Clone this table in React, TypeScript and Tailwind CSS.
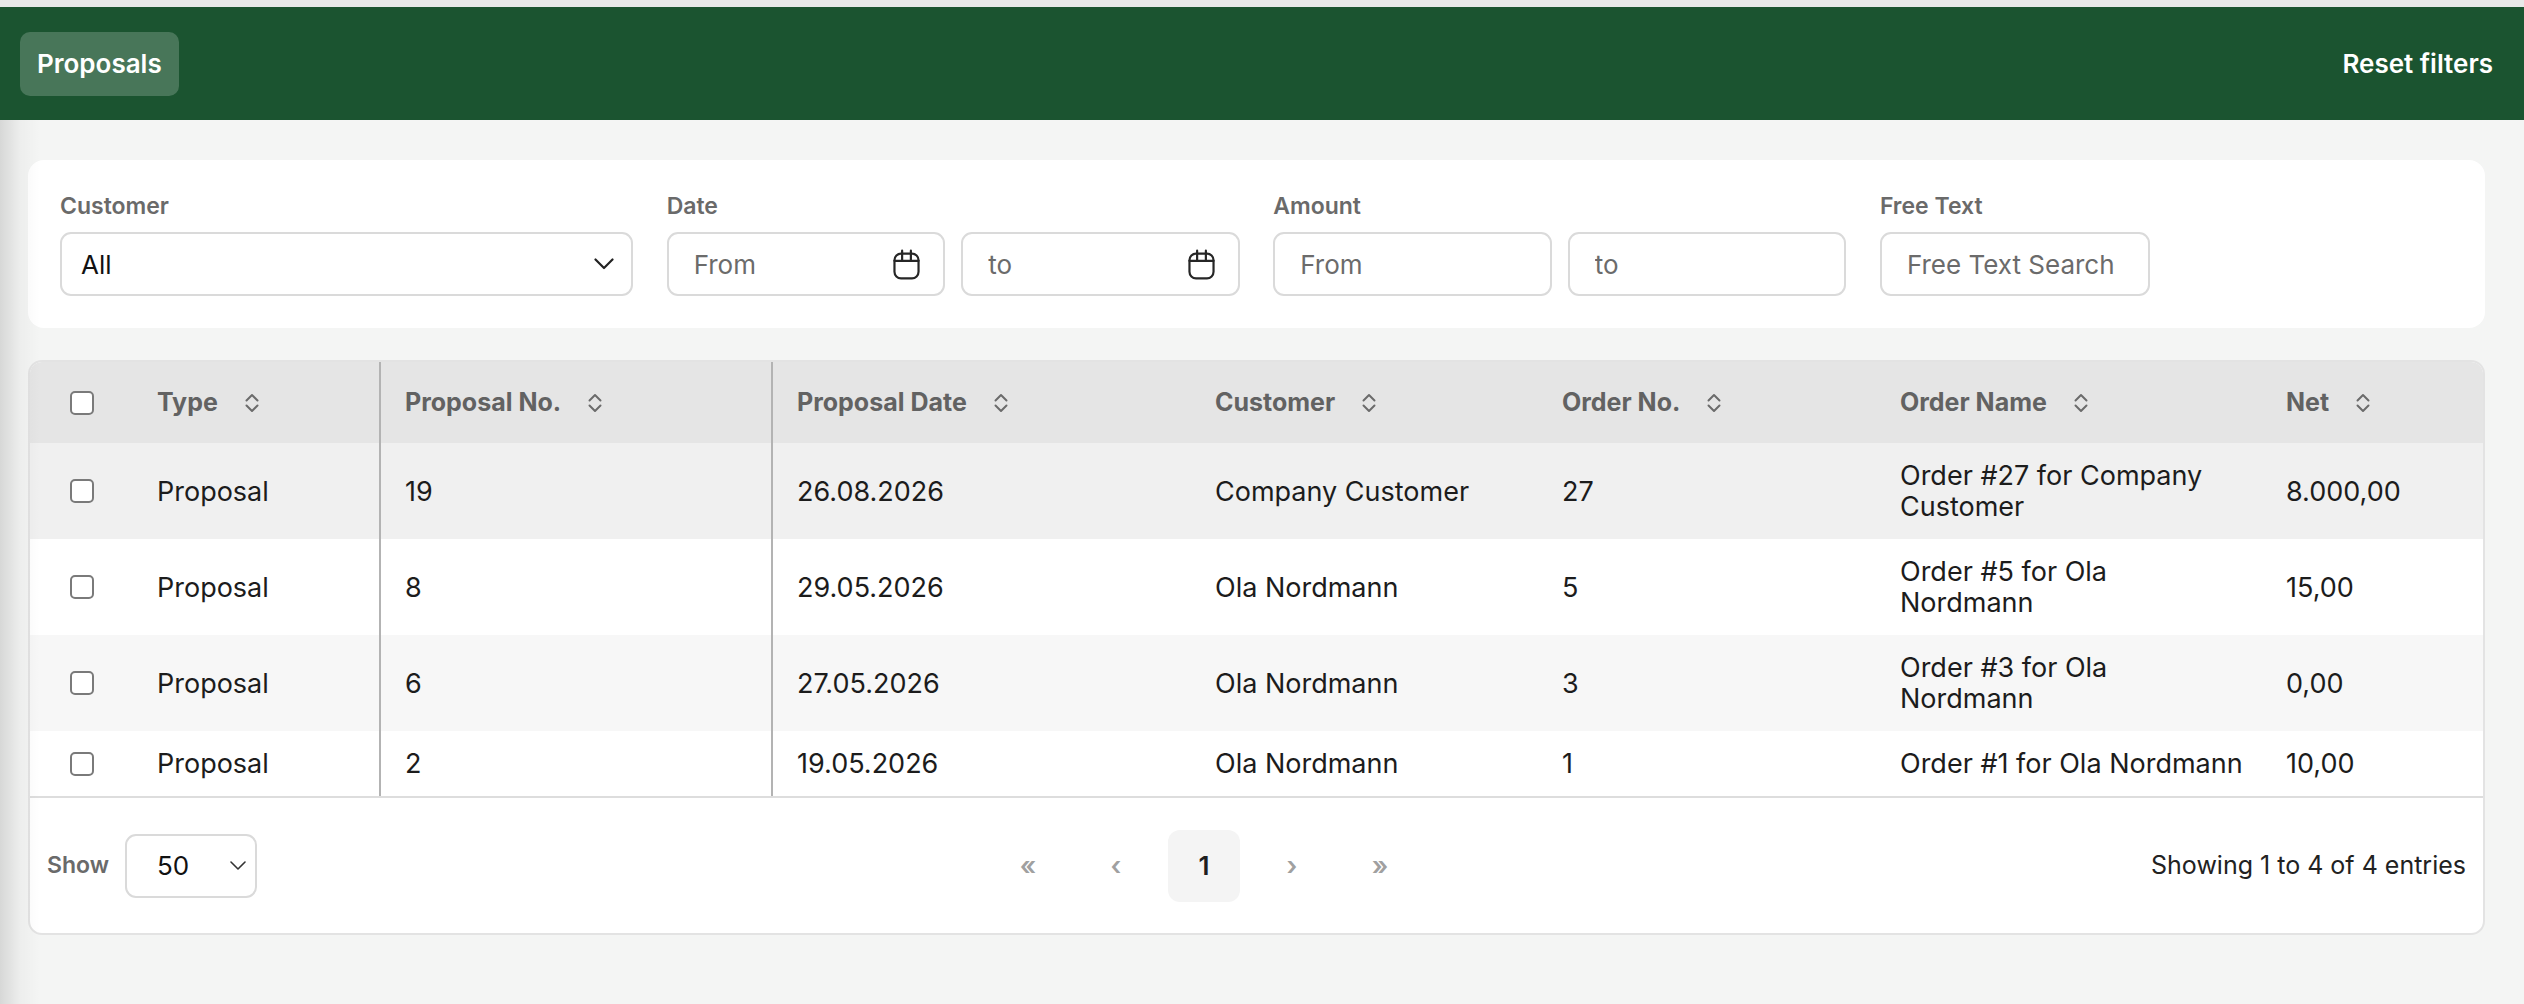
import type { ReactNode } from 'react';

const ROWS = [
  { no: '19', date: '26.08.2026', customer: 'Company Customer', order: '27', name: 'Order #27 for Company Customer', net: '8.000,00', bg: 'bg-[#f0f0f0]' },
  { no: '8', date: '29.05.2026', customer: 'Ola Nordmann', order: '5', name: 'Order #5 for Ola Nordmann', net: '15,00', bg: 'bg-white' },
  { no: '6', date: '27.05.2026', customer: 'Ola Nordmann', order: '3', name: 'Order #3 for Ola Nordmann', net: '0,00', bg: 'bg-[#f7f7f7]' },
  { no: '2', date: '19.05.2026', customer: 'Ola Nordmann', order: '1', name: 'Order #1 for Ola Nordmann', net: '10,00', bg: 'bg-white' },
];

const inputBox = 'h-16 rounded-[11px] border-2 border-[#dadada] bg-white text-[26px] text-[#111]';

function SortIcon() {
  return (
    <svg viewBox="0 0 16 22" className="h-[22px] w-4 shrink-0" fill="none" stroke="#6b6b6b" strokeWidth="2" strokeLinecap="round" strokeLinejoin="round">
      <path d="M2.5 8.5 8 3l5.5 5.5" />
      <path d="M2.5 13.5 8 19l5.5-5.5" />
    </svg>
  );
}

function CalendarIcon() {
  return (
    <svg viewBox="0 0 24 24" className="h-[35px] w-[35px] shrink-0" fill="none" stroke="#262626" strokeWidth="1.5" strokeLinecap="round">
      <rect x="3.75" y="4.5" width="16.5" height="17" rx="4.5" />
      <path d="M3.75 9.5h16.5" />
      <path d="M9 2.5v7M15 2.5v7" />
    </svg>
  );
}

function Chevron({ small = false }: { small?: boolean }) {
  return small ? (
    <svg viewBox="0 0 16 9" className="h-[9px] w-4" fill="none" stroke="#333" strokeWidth="1.6" strokeLinecap="round" strokeLinejoin="round">
      <path d="M1 1l7 7 7-7" />
    </svg>
  ) : (
    <svg viewBox="0 0 20 12" className="h-3 w-5" fill="none" stroke="#222" strokeWidth="2.2" strokeLinecap="round" strokeLinejoin="round">
      <path d="M1.5 1.5 10 10l8.5-8.5" />
    </svg>
  );
}

function Field({ label, children }: { label: string; children: ReactNode }) {
  return (
    <div className="min-w-0">
      <label className="mb-3 block text-[23px] leading-[28px] font-semibold text-[#6a6a6a]">{label}</label>
      {children}
    </div>
  );
}

function Checkbox() {
  return <input type="checkbox" className="mx-auto block h-6 w-6 appearance-none rounded-[5px] border-2 border-[#7a7a7a] bg-white" />;
}

function Th({ children, divider = false }: { children: ReactNode; divider?: boolean }) {
  return (
    <th className={`h-[81px] px-6 text-left align-middle text-[25px] font-bold text-[#626262] ${divider ? 'border-r-2 border-r-[#b3b3b3]' : ''}`}>
      <div className="flex items-center gap-[26px]">
        <span>{children}</span>
        <SortIcon />
      </div>
    </th>
  );
}

export default function App() {
  const td = 'px-6 py-[17px] align-middle text-[27px] leading-[31px] text-[#1c1c1c]';
  const divider = 'border-r-2 border-r-[#b3b3b3]';

  return (
    <div className="flex min-h-screen flex-col bg-[#f4f5f4] font-[Inter,sans-serif]">
      <div className="h-[7px] bg-[#e8e9e8]" />
      <header className="flex h-[113px] items-center justify-between bg-[#1b5430] px-5">
        <button className="h-16 rounded-[10px] bg-white/20 px-[17px] text-[26px] font-semibold text-white">Proposals</button>
        <button className="h-16 px-[11px] text-[26px] font-semibold text-white">Reset filters</button>
      </header>

      <main className="relative flex flex-1 flex-col gap-8 pt-10 pr-[39px] pb-[71px] pl-[28px]">
        <div className="pointer-events-none absolute inset-y-0 left-0 w-[40px] bg-linear-to-r from-black/[0.12] via-black/[0.03] to-transparent" />

        <section className="grid grid-cols-4 gap-x-[33.5px] rounded-2xl bg-white p-8">
          <Field label="Customer">
            <div className={`${inputBox} flex w-full items-center justify-between pr-[17px] pl-[19px]`}>
              <span>All</span>
              <Chevron />
            </div>
          </Field>
          <Field label="Date">
            <div className="flex gap-4">
              {['From', 'to'].map((p) => (
                <div key={p} className={`${inputBox} flex min-w-0 flex-1 items-center pr-[19px] pl-[25px]`}>
                  <input placeholder={p} className="w-0 min-w-0 flex-1 bg-transparent outline-none placeholder:text-[#6b6b6b]" />
                  <CalendarIcon />
                </div>
              ))}
            </div>
          </Field>
          <Field label="Amount">
            <div className="flex gap-4">
              {['From', 'to'].map((p) => (
                <input key={p} placeholder={p} className={`${inputBox} w-0 min-w-0 flex-1 px-[25px] outline-none placeholder:text-[#6b6b6b]`} />
              ))}
            </div>
          </Field>
          <Field label="Free Text">
            <input placeholder="Free Text Search" className={`${inputBox} w-[270px] px-[25px] outline-none placeholder:text-[#6b6b6b]`} />
          </Field>
        </section>

        <section className="overflow-hidden rounded-[14px] border-2 border-[#e3e3e3] bg-white">
          <table className="w-full table-fixed border-collapse">
            <colgroup>
              <col className="w-[103px]" />
              <col className="w-[247px]" />
              <col className="w-[392px]" />
              <col className="w-[419px]" />
              <col className="w-[347px]" />
              <col className="w-[338px]" />
              <col className="w-[386px]" />
              <col />
            </colgroup>
            <thead className="bg-[#e5e5e5]">
              <tr>
                <th className="h-[81px] align-middle">
                  <Checkbox />
                </th>
                <Th divider>Type</Th>
                <Th divider>Proposal No.</Th>
                <Th>Proposal Date</Th>
                <Th>Customer</Th>
                <Th>Order No.</Th>
                <Th>Order Name</Th>
                <Th>Net</Th>
              </tr>
            </thead>
            <tbody>
              {ROWS.map((r) => (
                <tr key={r.no} className={r.bg}>
                  <td className="align-middle">
                    <Checkbox />
                  </td>
                  <td className={`${td} ${divider}`}>Proposal</td>
                  <td className={`${td} ${divider}`}>{r.no}</td>
                  <td className={td}>{r.date}</td>
                  <td className={td}>{r.customer}</td>
                  <td className={td}>{r.order}</td>
                  <td className={`${td} !pr-2`}>
                    <span className="block max-w-[344px]">{r.name}</span>
                  </td>
                  <td className={td}>{r.net}</td>
                </tr>
              ))}
            </tbody>
          </table>

          <div className="flex h-[137px] items-center justify-between border-t-2 border-[#dddddd] px-[17px]">
            <div className="flex items-center gap-4">
              <span className="text-[23px] font-semibold text-[#6a6a6a]">Show</span>
              <div className="flex h-16 w-[132px] items-center justify-between rounded-[11px] border-2 border-[#dadada] pr-[9px] pl-[30px] text-[26px] text-[#111]">
                <span>50</span>
                <Chevron small />
              </div>
            </div>

            <nav className="flex gap-4">
              {['«', '‹', '1', '›', '»'].map((p) => (
                <button
                  key={p}
                  className={`flex h-[72px] w-[72px] items-center justify-center rounded-xl text-[26px] font-semibold ${p === '1' ? 'bg-[#f4f4f4] text-[#1e1e1e]' : 'text-[#a0a0a0]'}`}
                >
                  {p}
                </button>
              ))}
            </nav>

            <span className="text-[25px] text-[#222]">Showing 1 to 4 of 4 entries</span>
          </div>
        </section>
      </main>
    </div>
  );
}
